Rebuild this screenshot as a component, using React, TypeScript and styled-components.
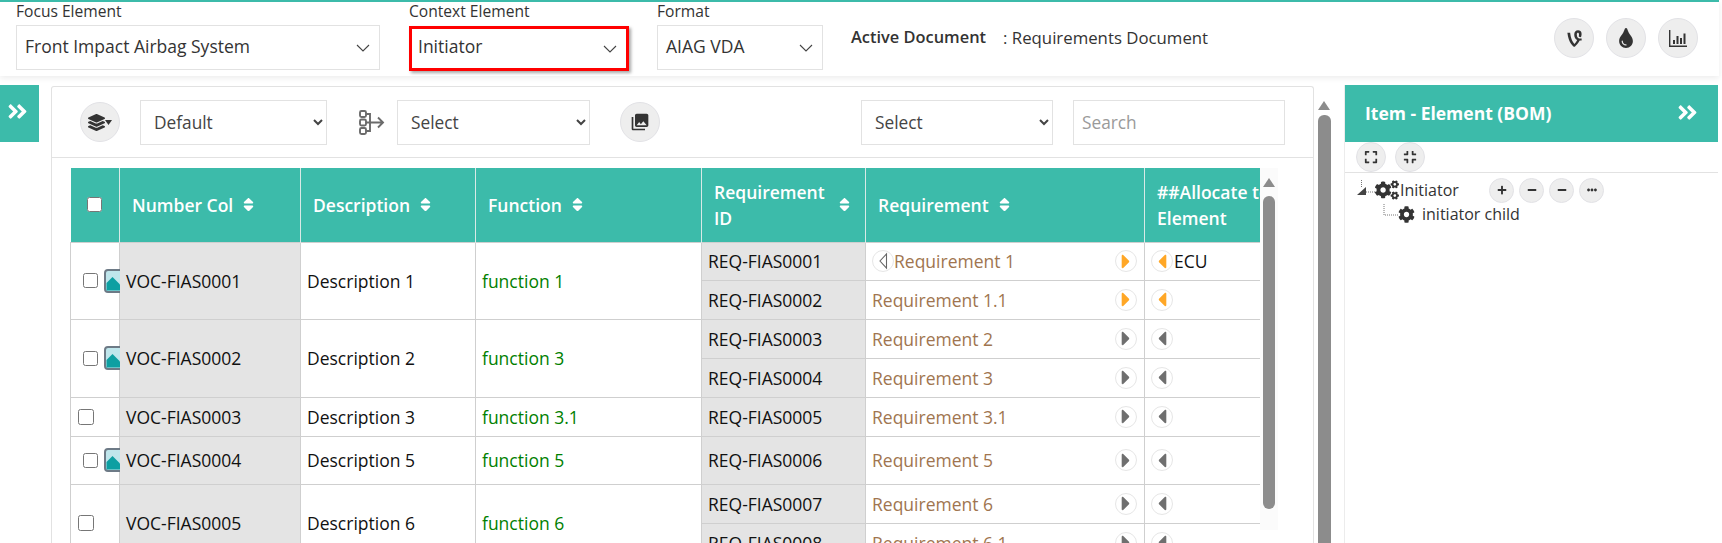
import React from "react";
import styled, { createGlobalStyle } from "styled-components";
import {
  FaAngleDoubleRight,
  FaCaretLeft,
  FaCaretRight,
  FaCog,
  FaCogs,
  FaCompress,
  FaEllipsisH,
  FaExpand,
  FaLayerGroup,
  FaMinus,
  FaPlus,
  FaSort,
  FaTint,
  FaVine,
} from "react-icons/fa";
import { MdPhotoLibrary } from "react-icons/md";

const TEAL = "#3cbbaa";
const LINE = "#cfcfcf";
const FONT = `"Open Sans", "Noto Sans", sans-serif`;

const Global = createGlobalStyle`
  html, body { margin: 0; padding: 0; background: #fff; overflow: hidden; }
  body { font-family: ${FONT}; color: #212529; }
  * { box-sizing: border-box; }
`;

const Page = styled.div`
  width: 1722px;
  height: 543px;
  display: flex;
  flex-direction: column;
  overflow: hidden;
  background: #fff;
`;

const TopBar = styled.header`
  height: 76px;
  width: 1719px;
  flex: none;
  display: flex;
  align-items: flex-start;
  border-top: 2px solid ${TEAL};
  box-shadow: 0 2px 6px rgba(0, 0, 0, 0.08);
  padding-left: 16px;
  padding-right: 21px;
`;

const Field = styled.div<{ $w: number; $gap: number }>`
  width: ${(p) => p.$w}px;
  margin-right: ${(p) => p.$gap}px;
  flex: none;
`;

const FieldLabel = styled.div`
  height: 23px;
  font-size: 15.6px;
  line-height: 18px;
  color: #333;
`;

const SelectShell = styled.div<{ $alert?: boolean }>`
  position: relative;
  height: 45px;
  margin-top: ${(p) => (p.$alert ? 1 : 0)}px;
  border: ${(p) => (p.$alert ? "3px solid #f00" : "1px solid #e2e2e2")};
  box-shadow: ${(p) => (p.$alert ? "2px 2px 3px rgba(0,0,0,.35)" : "none")};
  background: #fff;
  display: flex;
  align-items: center;
  padding: 0 0 ${(p) => (p.$alert ? 5 : 3)}px ${(p) => (p.$alert ? 6 : 8)}px;
  font-size: 17.5px;
  color: #333;
`;

const Chevron = styled.svg`
  position: absolute;
  right: 9px;
  top: 50%;
  margin-top: -4px;
  width: 14px;
  height: 8px;
  fill: none;
  stroke: #444;
  stroke-width: 1.1;
`;

const DocLabel = styled.div`
  flex: none;
  margin-top: 24px;
  margin-left: 28px;
  font-size: 16.4px;
  line-height: 22px;
  font-weight: 600;
  color: #333;
`;

const DocValue = styled(DocLabel)`
  margin-left: 17px;
  margin-top: 25px;
  font-size: 16.8px;
  font-weight: 500;
`;

const Spacer = styled.div`
  flex: 1;
`;

const RoundButton = styled.button<{ $w?: number; $h?: number; $size?: number; $ml?: number }>`
  flex: none;
  width: ${(p) => p.$w ?? 40}px;
  height: ${(p) => p.$h ?? 40}px;
  margin-left: ${(p) => p.$ml ?? 0}px;
  border-radius: 50%;
  padding: 0;
  border: 1px solid #e2e2e6;
  background: #eeeeee;
  color: #333;
  display: inline-flex;
  align-items: center;
  justify-content: center;
  font-size: ${(p) => p.$size ?? 16}px;
`;

const TopActions = styled.div`
  margin-top: 16px;
  display: flex;
  gap: 12px;
`;

const Body = styled.div`
  flex: 1;
  min-height: 0;
  display: flex;
  align-items: flex-start;
  padding-top: 9px;
`;

const SideToggle = styled.div`
  flex: none;
  width: 39px;
  height: 57px;
  background: ${TEAL};
  color: #fff;
  display: flex;
  align-items: center;
  justify-content: center;
  font-size: 23px;
  padding: 0 5px 4px 0;
`;

const MainPanel = styled.section`
  flex: none;
  width: 1263px;
  height: 470px;
  margin-left: 12px;
  margin-top: 1px;
  border: 1px solid #e2e2e2;
  border-bottom: 0;
  border-radius: 3px 3px 0 0;
  display: flex;
  flex-direction: column;
`;

const Toolbar = styled.div`
  height: 71px;
  flex: none;
  display: flex;
  align-items: center;
  padding: 0 30px 0 28px;
  border-bottom: 1px solid #e2e2e2;
`;

const Pick = styled.select<{ $w: number; $ml: number }>`
  width: ${(p) => p.$w}px;
  margin-left: ${(p) => p.$ml}px;
  height: 45px;
  border: 1px solid #e2e2e2;
  border-radius: 0;
  background: #fff;
  padding-left: 9px;
  font-family: ${FONT};
  font-size: 17.3px;
  color: #444;
  flex: none;
`;

const SearchBox = styled.input`
  width: 212px;
  height: 45px;
  margin-left: 20px;
  border: 1px solid #e2e2e2;
  padding-left: 8px;
  font-family: ${FONT};
  font-size: 17.3px;
  flex: none;
  outline: 0;
  &::placeholder {
    color: #9a9a9a;
  }
`;

const LayersMark = styled.span`
  display: inline-flex;
  align-items: center;
`;

const FlowIcon = styled.svg`
  flex: none;
  width: 27px;
  height: 27px;
  margin-left: 31px;
  fill: none;
  stroke: #6b6b6b;
  stroke-width: 1.9;
`;

const TableArea = styled.div`
  flex: 1;
  min-height: 0;
  display: flex;
  padding: 10px 0 0 18px;
  overflow: hidden;
`;

const TableClip = styled.div`
  width: 1190px;
  flex: none;
  overflow: hidden;
`;

const Grid = styled.table`
  border-collapse: collapse;
  table-layout: fixed;
  width: 1276px;
  font-size: 17.5px;
`;

const HeadCell = styled.th`
  height: 74px;
  background: ${TEAL};
  color: #fff;
  font-weight: 600;
  font-size: 17.5px;
  line-height: 26px;
  text-align: left;
  padding: 0 12px;
  border-right: 1px solid #d9e9e6;
  vertical-align: middle;
`;

const HeadInner = styled.div<{ $spread?: boolean }>`
  display: flex;
  align-items: center;
  justify-content: ${(p) => (p.$spread ? "space-between" : "flex-start")};
  gap: 7px;
  & > svg {
    flex: none;
    font-size: 17px;
  }
`;

const WideHead = styled.div`
  width: 130px;
  white-space: nowrap;
`;

const Cell = styled.td<{ $grey?: boolean; $tone?: string; $h?: number }>`
  height: ${(p) => p.$h ?? 39}px;
  padding: 0 6px;
  border: 1px solid ${LINE};
  background: ${(p) => (p.$grey ? "#e4e4e4" : "#fff")};
  color: ${(p) => p.$tone ?? "#111"};
  white-space: nowrap;
  vertical-align: middle;
`;

const SelectCell = styled(Cell)`
  padding: 0;
`;

const SelectInner = styled.div<{ $indent: number }>`
  display: flex;
  align-items: center;
  gap: 6px;
  padding-left: ${(p) => p.$indent}px;
  width: 49px;
  overflow: hidden;
  & > input {
    width: ${(p) => (p.$indent > 9 ? 15 : 16)}px;
    height: ${(p) => (p.$indent > 9 ? 15 : 16)}px;
    margin: 0;
    flex: none;
  }
  & > svg {
    flex: none;
  }
`;

const HeadCheck = styled.input`
  display: block;
  width: 15px;
  height: 15px;
  margin: 0 0 0 4px;
`;

const Thumb = styled.svg`
  width: 22px;
  height: 24px;
`;

const ReqLine = styled.div`
  display: flex;
  align-items: center;
`;

const ReqText = styled.span`
  flex: 1;
`;

const MiniRound = styled.span<{ $active?: boolean }>`
  flex: none;
  width: 22px;
  height: 22px;
  border-radius: 50%;
  border: 1px solid #e6e6e6;
  background: #fff;
  display: inline-flex;
  align-items: center;
  justify-content: center;
  font-size: 23px;
  color: ${(p) => (p.$active ? "#ffa726" : "#6f6f6f")};
`;

const ReqRight = styled(MiniRound)`
  margin-right: 1px;
`;

const OutlineCaret = styled.svg`
  width: 11px;
  height: 18px;
  fill: #fff;
  stroke: #666;
  stroke-width: 1.1;
`;

const AllocLine = styled.div`
  display: flex;
  align-items: center;
  gap: 1px;
`;

const Rail = styled.div<{ $w: number; $bg: string }>`
  flex: none;
  width: ${(p) => p.$w}px;
  background: ${(p) => p.$bg};
  display: flex;
  flex-direction: column;
  align-items: center;
`;

const InnerRail = styled(Rail)`
  height: 362px;
`;

const OuterRail = styled(Rail)`
  height: 460px;
  margin-left: 3px;
  margin-top: 6px;
`;

const RailArrow = styled.div<{ $top: number }>`
  margin-top: ${(p) => p.$top}px;
  width: 0;
  height: 0;
  border-left: 6.5px solid transparent;
  border-right: 6.5px solid transparent;
  border-bottom: 9px solid #8c8c8c;
`;

const RailThumb = styled.div<{ $h: number; $w: number; $top: number }>`
  margin-top: ${(p) => p.$top}px;
  width: ${(p) => p.$w}px;
  height: ${(p) => p.$h}px;
  background: #8c8c8c;
  border-radius: 6px;
`;

const RightPanel = styled.aside`
  flex: none;
  width: 374px;
  height: 470px;
  margin-left: 13px;
  border-left: 1px solid #ececec;
  display: flex;
  flex-direction: column;
`;

const PanelHead = styled.div`
  height: 57px;
  flex: none;
  background: ${TEAL};
  color: #fff;
  display: flex;
  align-items: center;
  justify-content: space-between;
  padding: 0 19px 2px 20px;
  font-size: 17.5px;
  font-weight: 700;
  & > svg {
    font-size: 23px;
  }
`;

const PanelTools = styled.div`
  height: 31px;
  flex: none;
  display: flex;
  align-items: center;
  gap: 9px;
  padding-left: 11px;
  border-bottom: 1px solid #e2e2e2;
`;

const Tree = styled.div`
  padding-top: 5px;
  color: #333;
  font-size: 16px;
`;

const TreeRow = styled.div<{ $indent: number }>`
  height: 24px;
  display: flex;
  align-items: center;
  padding-left: ${(p) => p.$indent}px;
`;

const TreeLine = styled.svg<{ $w: number }>`
  flex: none;
  width: ${(p) => p.$w}px;
  height: 24px;
`;

const TreeName = styled.span<{ $w?: number; $ml: number }>`
  margin-left: ${(p) => p.$ml}px;
  width: ${(p) => (p.$w ? `${p.$w}px` : "auto")};
  flex: none;
`;

const TreeActions = styled.div`
  display: flex;
  gap: 5px;
`;

const ImageThumb = () => (
  <Thumb viewBox="0 0 22 24">
    <rect x="1" y="1" width="24" height="22" rx="3" fill="#bfe6ec" stroke="#6d7a86" strokeWidth="2" />
    <path d="M2.5 21.5V14l6-6 8 8v5.5z" fill="#0d9fa2" />
  </Thumb>
);

const Sort = () => <FaSort />;

type Req = { id: string; name: string; on?: boolean; hollow?: boolean; alloc?: string };
type Group = {
  num: string;
  desc: string;
  fn: string;
  img: boolean;
  heights: number[];
  reqs: Req[];
};

const groups: Group[] = [
  {
    num: "VOC-FIAS0001",
    desc: "Description 1",
    fn: "function 1",
    img: true,
    heights: [38, 39],
    reqs: [
      { id: "REQ-FIAS0001", name: "Requirement 1", on: true, hollow: true, alloc: "ECU" },
      { id: "REQ-FIAS0002", name: "Requirement 1.1", on: true },
    ],
  },
  {
    num: "VOC-FIAS0002",
    desc: "Description 2",
    fn: "function 3",
    img: true,
    heights: [39, 39],
    reqs: [
      { id: "REQ-FIAS0003", name: "Requirement 2" },
      { id: "REQ-FIAS0004", name: "Requirement 3" },
    ],
  },
  {
    num: "VOC-FIAS0003",
    desc: "Description 3",
    fn: "function 3.1",
    img: false,
    heights: [39],
    reqs: [{ id: "REQ-FIAS0005", name: "Requirement 3.1" }],
  },
  {
    num: "VOC-FIAS0004",
    desc: "Description 5",
    fn: "function 5",
    img: true,
    heights: [48],
    reqs: [{ id: "REQ-FIAS0006", name: "Requirement 5" }],
  },
  {
    num: "VOC-FIAS0005",
    desc: "Description 6",
    fn: "function 6",
    img: false,
    heights: [39, 39],
    reqs: [
      { id: "REQ-FIAS0007", name: "Requirement 6" },
      { id: "REQ-FIAS0008", name: "Requirement 6.1" },
    ],
  },
];

const Dropdown = ({ w, gap, label, value, alert }: { w: number; gap: number; label: string; value: string; alert?: boolean }) => (
  <Field $w={w} $gap={gap}>
    <FieldLabel>{label}</FieldLabel>
    <SelectShell $alert={alert}>
      {value}
      <Chevron viewBox="0 0 14 8">
        <path d="M1 1l6 6 6-6" />
      </Chevron>
    </SelectShell>
  </Field>
);

export default function App() {
  return (
    <Page>
      <Global />
      <TopBar>
        <Dropdown w={364} gap={29} label="Focus Element" value="Front Impact Airbag System" />
        <Dropdown w={220} gap={28} label="Context Element" value="Initiator" alert />
        <Dropdown w={166} gap={0} label="Format" value="AIAG VDA" />
        <DocLabel>Active Document</DocLabel>
        <DocValue>: Requirements Document</DocValue>
        <Spacer />
        <TopActions>
          <RoundButton $size={19}>
            <FaVine />
          </RoundButton>
          <RoundButton $size={20}>
            <FaTint />
          </RoundButton>
          <RoundButton>
            <svg width="18" height="17" viewBox="0 0 18 17" fill="#333">
              <path d="M0 0h1.4v15.4H18V17H0z" />
              <rect x="4" y="10" width="2" height="4" />
              <rect x="7.5" y="6" width="2" height="8" />
              <rect x="11" y="8" width="2" height="6" />
              <rect x="14.5" y="3.5" width="2" height="10.5" />
            </svg>
          </RoundButton>
        </TopActions>
      </TopBar>
      <Body>
        <SideToggle>
          <FaAngleDoubleRight />
        </SideToggle>
        <MainPanel>
          <Toolbar>
            <RoundButton $size={17}>
              <LayersMark>
                <FaLayerGroup />
                <svg width="7" height="5" viewBox="0 0 7 5" fill="#333">
                  <path d="M0 0h7L3.5 5z" />
                </svg>
              </LayersMark>
            </RoundButton>
            <Pick $w={187} $ml={20} defaultValue="Default">
              <option>Default</option>
            </Pick>
            <FlowIcon viewBox="0 0 27 27">
              <rect x="2" y="2" width="6" height="6" rx="1.5" />
              <rect x="2" y="10.5" width="6" height="6" rx="1.5" />
              <rect x="2" y="19" width="6" height="6" rx="1.5" />
              <path d="M8 5h4v17H8M8 13.5h17M20 8.5l5 5-5 5" />
            </FlowIcon>
            <Pick $w={193} $ml={12} defaultValue="Select">
              <option>Select</option>
            </Pick>
            <RoundButton $size={20} $ml={30}>
              <MdPhotoLibrary />
            </RoundButton>
            <Pick $w={192} $ml={201} defaultValue="Select">
              <option>Select</option>
            </Pick>
            <SearchBox placeholder="Search" />
          </Toolbar>
          <TableArea>
            <TableClip>
              <Grid>
                <colgroup>
                  <col style={{ width: 49 }} />
                  <col style={{ width: 181 }} />
                  <col style={{ width: 175 }} />
                  <col style={{ width: 226 }} />
                  <col style={{ width: 164 }} />
                  <col style={{ width: 279 }} />
                  <col style={{ width: 202 }} />
                </colgroup>
                <thead>
                  <tr>
                    <HeadCell>
                      <HeadCheck type="checkbox" />
                    </HeadCell>
                    <HeadCell>
                      <HeadInner>
                        Number Col <Sort />
                      </HeadInner>
                    </HeadCell>
                    <HeadCell>
                      <HeadInner>
                        Description <Sort />
                      </HeadInner>
                    </HeadCell>
                    <HeadCell>
                      <HeadInner>
                        Function <Sort />
                      </HeadInner>
                    </HeadCell>
                    <HeadCell>
                      <HeadInner $spread>
                        <span>Requirement ID</span>
                        <Sort />
                      </HeadInner>
                    </HeadCell>
                    <HeadCell>
                      <HeadInner>
                        Requirement <Sort />
                      </HeadInner>
                    </HeadCell>
                    <HeadCell>
                      <WideHead>##Allocate to</WideHead>
                      <WideHead>Element</WideHead>
                    </HeadCell>
                  </tr>
                </thead>
                <tbody>
                  {groups.map((g) =>
                    g.reqs.map((r, i) => (
                      <tr key={r.id}>
                        {i === 0 && (
                          <>
                            <SelectCell rowSpan={g.reqs.length}>
                              <SelectInner $indent={g.img ? 12 : 7}>
                                <input type="checkbox" />
                                {g.img && <ImageThumb />}
                              </SelectInner>
                            </SelectCell>
                            <Cell $grey rowSpan={g.reqs.length}>
                              {g.num}
                            </Cell>
                            <Cell rowSpan={g.reqs.length}>{g.desc}</Cell>
                            <Cell $tone="#008000" rowSpan={g.reqs.length}>
                              {g.fn}
                            </Cell>
                          </>
                        )}
                        <Cell $grey $h={g.heights[i]}>
                          {r.id}
                        </Cell>
                        <Cell $tone="#a0754f" $h={g.heights[i]}>
                          <ReqLine>
                            {r.hollow && (
                              <MiniRound>
                                <OutlineCaret viewBox="0 0 11 18">
                                  <path d="M8.5 2v14L2 9z" />
                                </OutlineCaret>
                              </MiniRound>
                            )}
                            <ReqText>{r.name}</ReqText>
                            <ReqRight $active={r.on}>
                              <FaCaretRight />
                            </ReqRight>
                          </ReqLine>
                        </Cell>
                        <Cell $h={g.heights[i]}>
                          <AllocLine>
                            <MiniRound $active={r.on}>
                              <FaCaretLeft />
                            </MiniRound>
                            {r.alloc}
                          </AllocLine>
                        </Cell>
                      </tr>
                    ))
                  )}
                </tbody>
              </Grid>
            </TableClip>
            <InnerRail $w={18} $bg="#fbfbfb">
              <RailArrow $top={10} />
              <RailThumb $w={12} $h={313} $top={9} />
            </InnerRail>
          </TableArea>
        </MainPanel>
        <OuterRail $w={14} $bg="#fff">
          <RailArrow $top={10} />
          <RailThumb $w={13} $h={440} $top={5} />
        </OuterRail>
        <RightPanel>
          <PanelHead>
            Item - Element (BOM)
            <FaAngleDoubleRight />
          </PanelHead>
          <PanelTools>
            <RoundButton $w={30} $h={30} $size={14}>
              <FaExpand />
            </RoundButton>
            <RoundButton $w={30} $h={30} $size={14}>
              <FaCompress />
            </RoundButton>
          </PanelTools>
          <Tree>
            <TreeRow $indent={12}>
              <TreeLine $w={18} viewBox="0 0 18 24">
                <path d="M0 17l9-8v8z" fill="#444" />
                <path d="M4.5 2v7M9 14h9" stroke="#777" strokeDasharray="1 1" fill="none" />
              </TreeLine>
              <FaCogs size={24} color="#333" />
              <TreeName $ml={1} $w={89}>
                Initiator
              </TreeName>
              <TreeActions>
                <RoundButton $w={25} $h={25} $size={10}>
                  <FaPlus />
                </RoundButton>
                <RoundButton $w={25} $h={25} $size={10}>
                  <FaMinus />
                </RoundButton>
                <RoundButton $w={25} $h={25} $size={10}>
                  <FaMinus />
                </RoundButton>
                <RoundButton $w={25} $h={25} $size={10}>
                  <FaEllipsisH />
                </RoundButton>
              </TreeActions>
            </TreeRow>
            <TreeRow $indent={38}>
              <TreeLine $w={15} viewBox="0 0 15 24">
                <path d="M1 2v11h14" stroke="#777" strokeDasharray="1 1" fill="none" />
              </TreeLine>
              <FaCog size={17} color="#333" />
              <TreeName $ml={7}>initiator child</TreeName>
            </TreeRow>
          </Tree>
        </RightPanel>
      </Body>
    </Page>
  );
}
